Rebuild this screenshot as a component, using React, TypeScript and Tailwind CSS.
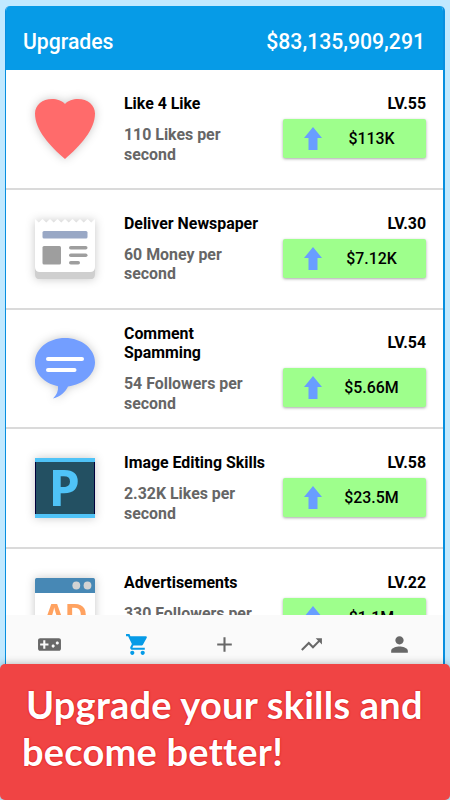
import React from 'react';
import { MdAdd, MdPerson, MdShoppingCart, MdTrendingUp, MdVideogameAsset } from 'react-icons/md';

interface Upgrade {
  title: string;
  effect: string;
  level: number;
  price: string;
  icon: React.ReactNode;
}

const HeartIcon: React.FC = () => (
  <svg viewBox="0 0 60 60" className="h-full w-full">
    <path d="M30 5C33 1.5 38 0 43 0C52.500 0 60 6 60 14.500C60 31 45 47 30 60C15 47 0 31 0 14.500C0 6 7.500 0 17 0C22 0 27 1.500 30 5Z" fill="#ff6b6b" />
  </svg>
);

const NewspaperIcon: React.FC = () => (
  <svg viewBox="0 0 60 60" className="h-full w-full">
    <path d="M0 48H60V55Q60 60.500 54.500 60.500H5.500Q0 60.500 0 55Z" fill="#cfcfcf" />
    <path
      d="M0 0L3.750 3.500L7.500 0L11.250 3.500L15 0L18.750 3.500L22.500 0L26.250 3.500L30 0L33.750 3.500L37.500 0L41.250 3.500L45 0L48.750 3.500L52.500 0L56.250 3.500L60 0V48Q60 53 55 53H5Q0 53 0 48Z"
      fill="#fff"
    />
    <rect x="7.500" y="12" width="45" height="7.500" rx="1.500" fill="#99a8c5" />
    <rect x="7.500" y="27" width="18.500" height="18.500" rx="1.500" fill="#9e9e9e" />
    <rect x="34" y="27" width="18.500" height="3.500" rx="1.750" fill="#9e9e9e" />
    <rect x="34" y="34.500" width="18.500" height="3.500" rx="1.750" fill="#9e9e9e" />
    <rect x="34" y="42" width="11" height="3.500" rx="1.750" fill="#9e9e9e" />
  </svg>
);

const CommentIcon: React.FC = () => (
  <svg viewBox="0 0 60 60" className="h-full w-full overflow-visible">
    <path d="M30 0C46.600 0 60 10.700 60 24.300C60 36.500 48.500 46.500 33 48.500C30.500 54 25 59 18 60.500C21.500 57 23.500 53 23 48.200C9.500 45.500 0 36 0 24.300C0 10.700 13.400 0 30 0Z" fill="#739eff" />
    <rect x="11" y="19" width="38" height="4" rx="2" fill="#fff" />
    <rect x="11" y="30" width="30.500" height="4" rx="2" fill="#fff" />
  </svg>
);

const EditorIcon: React.FC = () => (
  <svg viewBox="0 0 60 60" className="h-full w-full overflow-visible">
    <rect width="60" height="60" fill="#00003c" />
    <rect x="1" width="58" height="60" fill="#235062" />
    <rect width="60" height="4" fill="#4fc3f7" />
    <rect y="56" width="60" height="4" fill="#4fc3f7" />
    <text x="13.800" y="47.700" fontSize="50" fontWeight="700" fill="#4fc3f7" className="font-['Noto_Sans',sans-serif]">P</text>
  </svg>
);

const AdIcon: React.FC = () => (
  <svg viewBox="0 0 60 60" className="h-full w-full">
    <rect width="60" height="60" rx="1" fill="#fff" />
    <path d="M0 15V1.500Q0 0 1.500 0H58.500Q60 0 60 1.500V15Z" fill="#4788b5" />
    <circle cx="41.300" cy="7.500" r="3.900" fill="#d3d3d3" />
    <circle cx="52.500" cy="7.500" r="3.900" fill="#d3d3d3" />
    <text x="30.500" y="48" fontSize="31" fontWeight="700" textAnchor="middle" fill="#ffa260" className="font-['Noto_Sans',sans-serif]">AD</text>
  </svg>
);

const upgrades: Upgrade[] = [
  { title: 'Like 4 Like', effect: '110 Likes per\nsecond', level: 55, price: '$113K', icon: <HeartIcon /> },
  { title: 'Deliver Newspaper', effect: '60 Money per\nsecond', level: 30, price: '$7.12K', icon: <NewspaperIcon /> },
  { title: 'Comment\nSpamming', effect: '54 Followers per\nsecond', level: 54, price: '$5.66M', icon: <CommentIcon /> },
  { title: 'Image Editing Skills', effect: '2.32K Likes per\nsecond', level: 58, price: '$23.5M', icon: <EditorIcon /> },
  { title: 'Advertisements', effect: '330 Followers per\nsecond', level: 22, price: '$1.1M', icon: <AdIcon /> },
];

const navIcons = [MdVideogameAsset, MdShoppingCart, MdAdd, MdTrendingUp, MdPerson];

const UpgradeRow: React.FC<{ upgrade: Upgrade }> = ({ upgrade }) => (
  <div className="flex h-[119.75px] shrink-0 items-center border-b-2 border-[#dadada] pr-[17px] pl-[29px]">
    <div className="mr-[29px] h-[60px] w-[60px] shrink-0 drop-shadow-[0_0_5px_rgba(0,0,0,0.22)]">{upgrade.icon}</div>
    <div className="flex-1">
      <div className="flex items-center justify-between text-[15.9px] leading-[19.3px] font-bold text-black">
        <h2 className="whitespace-pre">{upgrade.title}</h2>
        <span>LV.{upgrade.level}</span>
      </div>
      <div className="mt-1.5 flex items-start justify-between">
        <p className="pt-1.5 text-[15.9px] leading-[19.3px] font-bold whitespace-pre text-[#666]">{upgrade.effect}</p>
        <button type="button" className="flex h-[39px] w-[143px] shrink-0 items-center rounded-xs bg-[#9eff8c] pl-[21px] shadow-[0_1px_3px_rgba(0,0,0,0.35)]">
          <svg viewBox="0 0 18 23" className="h-[23px] w-[18px]">
            <path d="M9 0L18 11H13.500V23H4.500V11H0Z" fill="#699eff" />
          </svg>
          <span className="ml-1.5 flex-1 pr-[11px] text-center text-[15.9px] font-medium text-black">{upgrade.price}</span>
        </button>
      </div>
    </div>
  </div>
);

const App: React.FC = () => {
  return (
    <div className="flex h-[800px] w-[450px] flex-col overflow-hidden bg-[#c1e9ff] font-[Roboto,sans-serif]">
      <main className="mx-[5px] mt-1.5 flex h-[658px] shrink-0 flex-col overflow-hidden rounded-t-[5px] border-r-2 border-l border-[#078fdf] bg-white">
        <header className="-mr-0.5 -ml-px flex h-16 shrink-0 items-center justify-between bg-[#069be7] pt-2 pr-5 pl-[18px] text-white">
          <h1 className="text-[21.2px] font-medium">Upgrades</h1>
          <span className="text-[21.2px] font-medium">$83,135,909,291</span>
        </header>
        <div className="flex h-[545px] shrink-0 flex-col overflow-hidden">
          {upgrades.map((upgrade) => (
            <UpgradeRow key={upgrade.title} upgrade={upgrade} />
          ))}
        </div>
        <nav className="grid h-[60px] shrink-0 grid-cols-5 justify-items-center bg-[#fafafa] pt-[17px] text-[#686868]">
          {navIcons.map((Icon, index) => (
            <Icon key={index} size={25} className={index === 1 ? 'text-[#069be7]' : ''} />
          ))}
        </nav>
      </main>
      <footer className="relative h-[136px] shrink-0 rounded-[5px] bg-[#f04444] pt-[17px] pl-[22px] font-[Lato,sans-serif] text-[38px] leading-[47px] font-bold tracking-[0.22px] whitespace-pre text-white shadow-[0_0_8px_rgba(0,0,0,0.3)] [font-variant-ligatures:none] [text-shadow:0_0_2px_#d80000]">
        <p className="pl-1">Upgrade your skills and</p>
        <p>become better!</p>
      </footer>
    </div>
  );
};

export default App;
